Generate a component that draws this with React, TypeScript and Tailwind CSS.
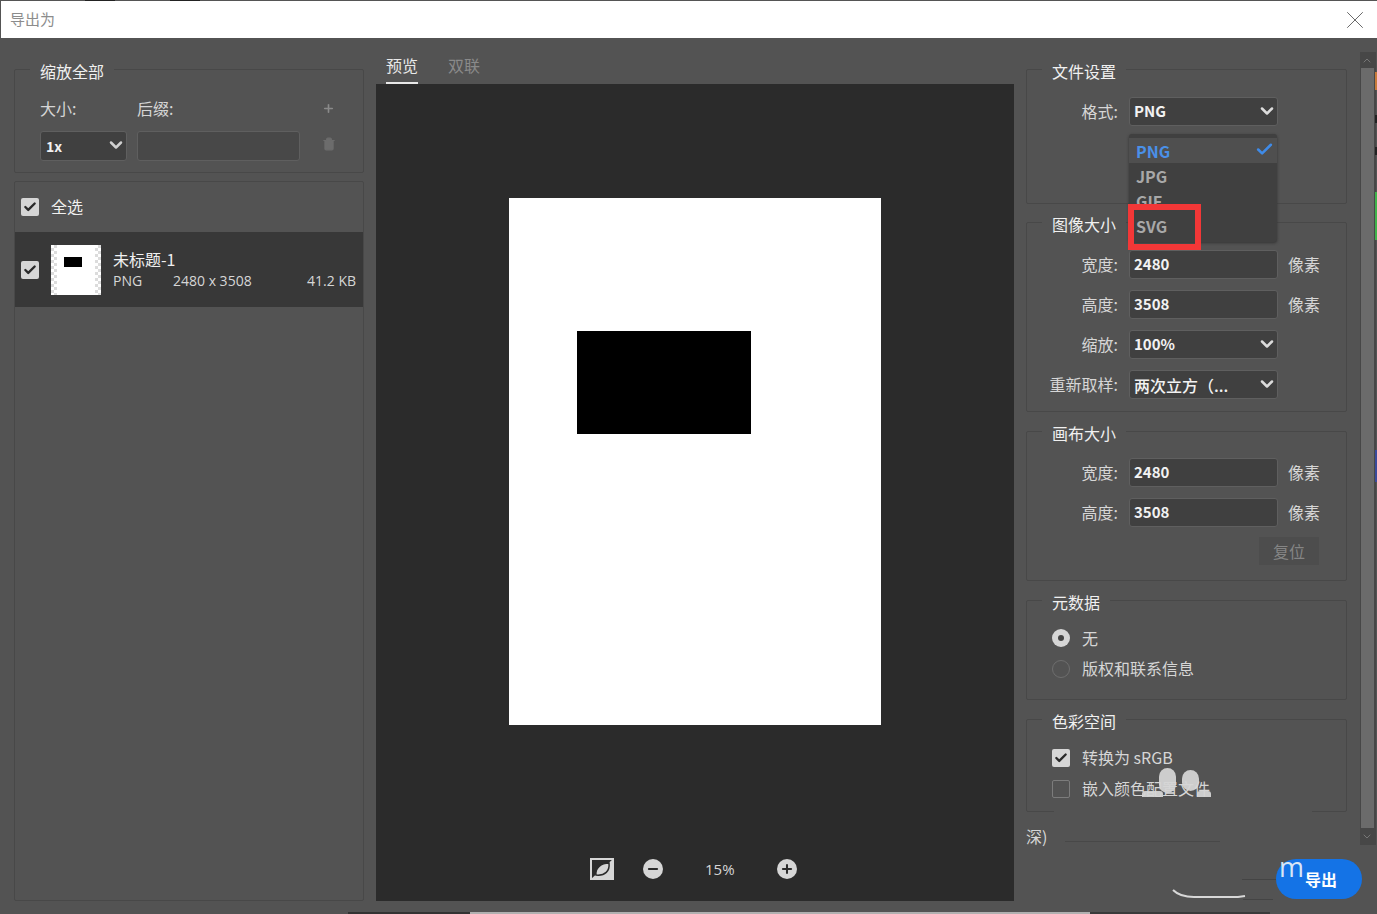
import type { ReactNode } from "react";
import { Check, ChevronDown, Minus, Plus, Trash2, X } from "lucide-react";

function Group({ title, className, children }: { title: string; className: string; children: ReactNode }) {
  return (
    <fieldset className={`border border-[#484848] rounded-[2px] ${className}`}>
      <legend className="ml-[15px] px-[10px] pt-[4px] text-[16px] leading-[24px] text-[#f0f0f0]">{title}</legend>
      {children}
    </fieldset>
  );
}

function Box({ children, arrow, plain }: { children: ReactNode; arrow?: boolean; plain?: boolean }) {
  return (
    <div className="w-[149px] h-[29px] rounded-[3px] bg-[#404040] border border-[#5f5f5f] flex items-center justify-between pl-[4px] text-[15px] text-[#f2f2f2]">
      <span className={plain ? "text-[16px] font-medium" : "font-semibold"}>{children}</span>
      {arrow && <ChevronDown size={20} strokeWidth={3} className="text-[#dcdcdc] -mt-[2px]" />}
    </div>
  );
}

function Row({ label, value, unit, arrow, plain }: { label: string; value: string; unit?: boolean; arrow?: boolean; plain?: boolean }) {
  return (
    <div className="flex items-center h-[29px] mb-[11px]">
      <div className="w-[102px] text-right pr-[11px] pb-[2px] text-[16px] text-[#d6d6d6] whitespace-nowrap">{label}</div>
      <Box arrow={arrow} plain={plain}>{value}</Box>
      {unit && <div className="ml-[10px] pb-[2px] text-[16px] text-[#d6d6d6]">像素</div>}
    </div>
  );
}

function CheckBox({ on }: { on: boolean }) {
  return on ? (
    <div className="w-[18px] h-[18px] rounded-[2px] bg-[#d6d6d6] flex items-center justify-center shrink-0">
      <Check size={14} strokeWidth={4} className="text-[#2a2a2a]" />
    </div>
  ) : (
    <div className="w-[18px] h-[18px] rounded-[2px] border border-[#7c7c7c] shrink-0" />
  );
}

export default function App() {
  return (
    <div className="w-[1377px] h-[914px] overflow-hidden relative bg-[#535353] flex flex-col font-['Noto_Sans_CJK_SC',sans-serif]">
      {/* Title bar */}
      <div className="h-[38px] shrink-0 bg-white border-t border-[#555] ml-[1px] flex items-center justify-between pl-[9px] pr-[7px]">
        <span className="text-[15px] text-[#8c8c8c]">导出为</span>
        <X size={30} strokeWidth={0.7} className="text-[#555]" />
      </div>

      <div className="flex flex-1 min-h-0">
        {/* Left column */}
        <div className="w-[350px] ml-[14px] shrink-0 pt-[17px] flex flex-col">
          <Group title="缩放全部" className="h-[118px]">
            <div className="flex pl-[25px] pt-[13px] text-[16px] text-[#d6d6d6] h-[42px]">
              <span className="w-[97px]">大小:</span>
              <span className="flex-1">后缀:</span>
              <Plus size={13} strokeWidth={3} className="text-[#8a8a8a] mr-[28px] mt-[6px]" />
            </div>
            <div className="flex items-center pl-[25px] mt-[6px]">
              <div className="w-[87px] h-[30px] rounded-[3px] bg-[#404040] border border-[#5f5f5f] flex items-center justify-between pl-[5px] text-[14px] font-semibold text-[#f2f2f2]">
                1x
                <ChevronDown size={20} strokeWidth={3} className="text-[#d0d0d0] -mt-[2px]" />
              </div>
              <div className="w-[163px] h-[30px] ml-[10px] rounded-[3px] bg-[#484848] border border-[#5f5f5f]" />
              <Trash2 size={14} className="ml-[22px] text-[#6c6c6c] -mt-[5px]" fill="#6c6c6c" />
            </div>
          </Group>

          <div className="mt-[8px] flex-1 border border-[#484848] rounded-[2px] mb-[13px]">
            <div className="h-[50px] flex items-center pl-[6px]">
              <CheckBox on />
              <span className="ml-[12px] pb-[2px] text-[16px] text-[#f0f0f0]">全选</span>
            </div>
            <div className="h-[75px] bg-[#383838] flex items-center pl-[6px] pr-[7px]">
              <CheckBox on />
              <div className="ml-[12px] w-[50px] h-[50px] bg-white shrink-0 flex">
                <div className="w-[6px] bg-[repeating-conic-gradient(#dcdcdc_0_25%,#ffffff_0_50%)] bg-[length:6px_6px]" />
                <div className="w-[18px] h-[10px] mt-[12px] ml-[7px] bg-black" />
                <div className="flex-1" />
                <div className="w-[6px] bg-[repeating-conic-gradient(#dcdcdc_0_25%,#ffffff_0_50%)] bg-[length:6px_6px]" />
              </div>
              <div className="ml-[12px] flex-1">
                <div className="text-[16px] leading-[22px] text-[#f0f0f0]">未标题-1</div>
                <div className="flex text-[14px] leading-[22px] text-[#d6d6d6] font-['Open_Sans',sans-serif]">
                  <span className="w-[60px]">PNG</span>
                  <span className="flex-1">2480 x 3508</span>
                  <span>41.2 KB</span>
                </div>
              </div>
            </div>
          </div>
        </div>

        {/* Preview */}
        <div className="w-[638px] ml-[12px] shrink-0 flex flex-col pb-[13px]">
          <div className="h-[46px] flex pl-[10px] pt-[15px] text-[16px] gap-[30px]">
            <span className="h-[31px] border-b-2 border-[#e8e8e8] text-[#e8e8e8]">预览</span>
            <span className="text-[#8a8a8a]">双联</span>
          </div>
          <div className="flex-1 bg-[#2b2b2b] flex flex-col items-center pt-[114px]">
            <div className="w-[372px] h-[527px] bg-white pt-[133px] pl-[68px]">
              <div className="w-[174px] h-[103px] bg-black" />
            </div>
            <div className="mt-[133px] flex items-center text-[#d6d6d6] w-[210px]">
              <svg width="24" height="22" viewBox="0 0 24 22">
                <rect x="1" y="1" width="22" height="20" fill="#2b2b2b" stroke="#d6d6d6" strokeWidth="2" />
                <path d="M23 1v20H1z" fill="#d6d6d6" />
                <path d="M6 17C5 10 11 5 19 5c1 8-4 13-13 12z" fill="#d6d6d6" stroke="#2b2b2b" strokeWidth="1.5" />
              </svg>
              <div className="ml-[29px] w-[20px] h-[20px] rounded-full bg-[#d6d6d6] flex items-center justify-center">
                <Minus size={14} strokeWidth={3.5} className="text-[#2b2b2b]" />
              </div>
              <span className="ml-[42px] w-[72px] text-[15px] font-['Open_Sans',sans-serif]">15%</span>
              <div className="w-[20px] h-[20px] rounded-full bg-[#d6d6d6] flex items-center justify-center">
                <Plus size={14} strokeWidth={3.5} className="text-[#2b2b2b]" />
              </div>
            </div>
          </div>
        </div>

        {/* Right column */}
        <div className="w-[321px] ml-[12px] shrink-0 pt-[17px] flex flex-col">
          <Group title="文件设置" className="h-[149px]">
            <div className="pt-[14px]">
              <Row label="格式:" value="PNG" arrow />
            </div>
          </Group>
          <Group title="图像大小" className="h-[204px] mt-[4px]">
            <div className="pt-[14px]">
              <Row label="宽度:" value="2480" unit />
              <Row label="高度:" value="3508" unit />
              <Row label="缩放:" value="100%" arrow />
              <Row label="重新取样:" value="两次立方（..." arrow plain />
            </div>
          </Group>
          <Group title="画布大小" className="h-[164px] mt-[5px]">
            <div className="pt-[13px]">
              <Row label="宽度:" value="2480" unit />
              <Row label="高度:" value="3508" unit />
              <div className="flex justify-end pr-[27px] -mt-[1px]">
                <div className="w-[60px] h-[28px] bg-[#4d4d4d] text-[#858585] text-[16px] flex items-center justify-center">复位</div>
              </div>
            </div>
          </Group>
          <Group title="元数据" className="h-[114px] mt-[5px]">
            <div className="pl-[25px] pt-[9px] text-[16px] text-[#d6d6d6]">
              <div className="flex items-center h-[30px]">
                <div className="w-[18px] h-[18px] rounded-full bg-[#d6d6d6] flex items-center justify-center">
                  <div className="w-[6px] h-[6px] rounded-full bg-[#444]" />
                </div>
                <span className="ml-[12px]">无</span>
              </div>
              <div className="flex items-center h-[30px] mt-[1px]">
                <div className="w-[18px] h-[18px] rounded-full border border-[#6e6e6e]" />
                <span className="ml-[12px] pb-[2px]">版权和联系信息</span>
              </div>
            </div>
          </Group>
          <Group title="色彩空间" className="h-[107px] mt-[5px]">
            <div className="pl-[25px] pt-[10px] text-[16px] text-[#d6d6d6]">
              <div className="flex items-center h-[30px]">
                <CheckBox on />
                <span className="ml-[12px] pb-[2px]">转换为 sRGB</span>
              </div>
              <div className="flex items-center h-[30px] mt-[1px]">
                <CheckBox on={false} />
                <span className="ml-[12px] pb-[2px] relative z-10">嵌入颜色配置文件</span>
              </div>
            </div>
          </Group>
        </div>

        {/* Scrollbar */}
        <div className="w-[16px] ml-[13px] shrink-0 mt-[14px] h-[793px] bg-[#474747] flex flex-col pl-[1px]">
          <div className="h-[16px] flex items-center justify-center pr-[3px]">
            <ChevronDown size={13} className="rotate-180 text-[#777]" />
          </div>
          <div className="w-[13px] flex-1 bg-[#6b6b6b]" />
          <div className="h-[17px] flex items-center justify-center pr-[3px]">
            <ChevronDown size={13} className="text-[#777]" />
          </div>
        </div>
      </div>

      {/* Dropdown menu and the red mark over it */}
      <div className="absolute left-[1129px] top-[134px] w-[148px] h-[108px] rounded-[3px] bg-[#404040] shadow-[0_1px_3px_#333] text-[16px] font-semibold text-[#a8a8a8] overflow-hidden pt-[4px]">
        <div className="h-[25px] bg-[#4f4f4f] flex items-center justify-between pl-[7px] pr-[3px] text-[#4a90e8]">
          PNG
          <Check size={19} strokeWidth={3.2} className="text-[#3f8be8] -mt-[3px]" />
        </div>
        <div className="h-[25px] flex items-center pl-[7px]">JPG</div>
        <div className="h-[25px] flex items-center pl-[7px]">GIF</div>
        <div className="h-[25px] flex items-center pl-[7px]">SVG</div>
      </div>
      <div className="absolute left-[1128px] top-[204px] w-[73px] h-[46px] border-[6px] border-[#f33737]" />

      {/* Partly erased bits at the bottom right */}
      <div className="absolute left-[1054px] top-[810px] w-[258px] h-[5px] bg-[#535353]" />
      <div className="absolute left-[1026px] top-[824px] text-[16px] text-[#d6d6d6]">深)</div>
      <div className="absolute left-[1065px] top-[841px] w-[155px] h-[1px] bg-[#484848]" />
      <div className="absolute left-[1242px] top-[879px] w-[36px] h-[1px] bg-[#444]" />
      <div className="absolute left-[1243px] top-[899px] w-[30px] h-[1px] bg-[#444]" />
      <div className="absolute left-[1276px] top-[859px] w-[86px] h-[40px] rounded-full bg-[#1473e6] text-white text-[16px] font-semibold flex items-center justify-center pl-[4px]">导出</div>
      <div className="absolute left-[1279px] top-[852px] text-[27px] leading-[30px] font-medium text-[#d8e6f5] font-['Open_Sans',sans-serif]">m</div>
      <svg className="absolute left-[1172px] top-[888px]" width="74" height="12" viewBox="0 0 74 12">
        <path d="M1 2C6 7 12 9 22 9H66L73 8" fill="none" stroke="#d8d8d8" strokeWidth="2" />
      </svg>

      {/* Watermark */}
      <div className="absolute left-[1159px] top-[768px] w-[17px] h-[25px] rounded-full bg-[#cdcdcd]" />
      <div className="absolute left-[1182px] top-[770px] w-[17px] h-[21px] rounded-full bg-[#cdcdcd]" />
      <div className="absolute left-[1142px] top-[791px] w-[21px] h-[6px] rounded-t-[3px] bg-[#cdcdcd]" />
      <div className="absolute left-[1197px] top-[791px] w-[14px] h-[6px] rounded-t-[3px] bg-[#cdcdcd]" />

      {/* Slivers of the window behind */}
      <div className="absolute left-[85px] top-0 w-[30px] h-[1px] bg-[#222]" />
      <div className="absolute left-[170px] top-0 w-[30px] h-[1px] bg-[#222]" />
      <div className="absolute left-[1375px] top-[72px] w-[2px] h-[18px] bg-[#c77a3a]" />
      <div className="absolute left-[1375px] top-[115px] w-[2px] h-[8px] bg-[#222]" />
      <div className="absolute left-[1375px] top-[147px] w-[2px] h-[8px] bg-[#222]" />
      <div className="absolute left-[1375px] top-[192px] w-[2px] h-[48px] bg-[#3fb24a]" />
      <div className="absolute left-[1375px] top-[450px] w-[2px] h-[32px] bg-[#3a4a9a]" />
      <div className="absolute left-[348px] top-[912px] w-[122px] h-[2px] bg-[#333]" />
      <div className="absolute left-[470px] top-[912px] w-[620px] h-[2px] bg-[#b0b0b0]" />
      <div className="absolute left-[1090px] top-[912px] w-[180px] h-[2px] bg-[#3a3a3a]" />
    </div>
  );
}
